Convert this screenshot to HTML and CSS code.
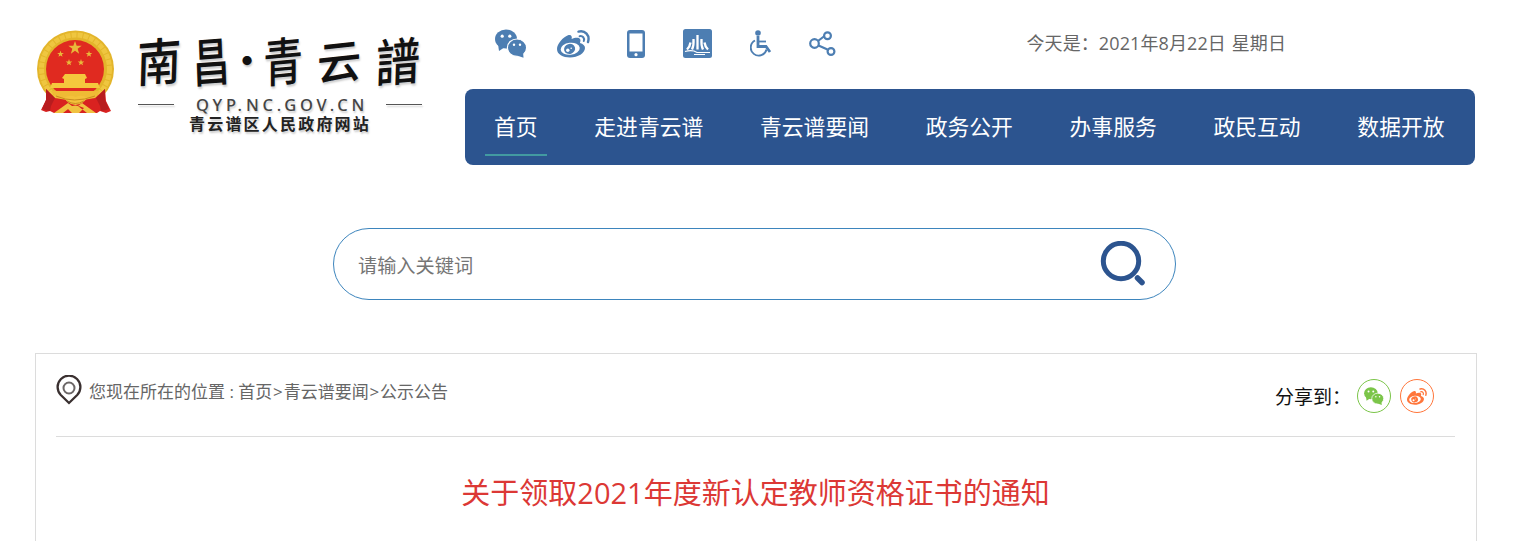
FILE: index.html
```html
<!DOCTYPE html>
<html lang="zh-CN">
<head>
    <meta charset="UTF-8">
    <title>关于领取2021年度新认定教师资格证书的通知</title>
    <link rel="stylesheet" href="styles.css">
</head>
<body>
    <!-- shared icons -->
    <svg class="symbols" width="0" height="0">
        <symbol id="icon-wechat" viewBox="0 0 32 29">
            <ellipse cx="11" cy="10" rx="11" ry="9.6" fill="currentColor"/>
            <path d="M3 15L4 22L10 18Z" fill="currentColor"/>
            <ellipse cx="22" cy="18.7" rx="9.6" ry="8.7" fill="currentColor" stroke="#fff" stroke-width="1.2"/>
            <path d="M22 26.5L28.5 28.8L28 23Z" fill="currentColor"/>
            <g fill="#fff">
                <circle cx="7.2" cy="7.2" r="1.6"/>
                <circle cx="14.8" cy="7.2" r="1.6"/>
                <circle cx="19" cy="15.8" r="1.2"/>
                <circle cx="25" cy="15.8" r="1.2"/>
            </g>
        </symbol>
        <symbol id="icon-weibo" viewBox="0 0 33 28">
            <path d="M0 19C0 14 6 7 11 5.2C14 4.2 15.5 6 14.6 9C18 7.6 23 7 23.4 10C23.6 11.4 23 12.6 23 13C26 14 28 15.6 28 18C28 23 21 27.5 13 27.5C6 27.5 0 24.5 0 19Z" fill="currentColor"/>
            <ellipse cx="13.2" cy="18.8" rx="9.6" ry="6" fill="#fff" transform="rotate(-6 13.2 18.8)"/>
            <ellipse cx="12.6" cy="18.9" rx="5.6" ry="5" fill="currentColor" transform="rotate(-18 12.6 18.9)"/>
            <circle cx="10.8" cy="20.3" r="1.7" fill="#fff"/>
            <circle cx="14.2" cy="18.2" r=".8" fill="#fff"/>
            <path d="M21.5 1.6C28 -.2 33.2 5.4 31 12" fill="none" stroke="currentColor" stroke-width="2.4" stroke-linecap="round"/>
            <path d="M22.6 6.2C25.8 5.6 27.8 8 26.8 11" fill="none" stroke="currentColor" stroke-width="2" stroke-linecap="round"/>
        </symbol>
        <symbol id="star" viewBox="-10 -10 20 20">
            <path d="M0-10L2.4-3.1L9.5-3.1L3.8 1.2L5.9 8.1L0 4L-5.9 8.1L-3.8 1.2L-9.5-3.1L-2.4-3.1Z" fill="#e9b93a"/>
        </symbol>
    </svg>

    <div class="header">
        <a class="logo" href="#">
            <svg class="emblem" width="80" height="86" viewBox="0 0 80 86">
                <circle cx="39.5" cy="40" r="38.5" fill="#e3b52b"/>
                <circle cx="39.5" cy="40" r="34" fill="none" stroke="#efc640" stroke-width="5" stroke-dasharray="5 1"/>
                <circle cx="39" cy="40" r="29" fill="#e02a20"/>
                <use href="#star" x="32" y="12" width="14" height="14"/>
                <use href="#star" x="21" y="21.500" width="7" height="7"/>
                <use href="#star" x="49.500" y="21.500" width="7" height="7"/>
                <use href="#star" x="29.500" y="30" width="7" height="7"/>
                <use href="#star" x="41.500" y="30" width="7" height="7"/>
                <path d="M29 45h20l2 4-2 1v4h13l2 5H14l2-5h12v-4l-2-1z" fill="#f5c83d"/>
                <path d="M15 62h49c-6 10-16 14-25 14S21 72 15 62z" fill="#efbb35"/>
                <path d="M10 60l9 9 12 2 8 4 8-4 12-2 10-9 1 12 5 10-5 2-6-2-3 2H18l-4-2-4 1-5-2 5-10z" fill="#d92220"/>
                <path d="M10 60l9 9-4 8-1 5-5-1-3-1 4-9zM69 60l-9 9 4 8 1 5 5-1 3-1-4-9z" fill="#b81c1e"/>
                <path d="M28 69q6-4 11.500-1 6-3 12 1l-4 4q-8 6-16 0z" fill="#f3c13b"/>
                <path d="M18 84l14-10 4 3-9 7zM60 84l-14-10-4 3 9 7zM31 79q8-5 17 0l-5 5h-7z" fill="#f0c241"/>
                <path d="M20 67q18 8 39 0M31 72q8 5 17 0" fill="none" stroke="#c98d1f"/>
            </svg>
            <div class="logo-text">
                <div class="logo-name">
                    <span class="nan">南</span>
                    <span class="chang">昌</span>
                    <span class="dot">·</span>
                    <span class="qing">青</span>
                    <span class="yun">云</span>
                    <span class="pu">譜</span>
                </div>
                <div class="logo-domain"><i></i><span>QYP.NC.GOV.CN</span><i></i></div>
                <div class="logo-sub">青云谱区人民政府网站</div>
            </div>
        </a>

        <div class="header-right">
            <div class="top">
                <div class="tools">
                    <svg width="32" height="29"><use href="#icon-wechat"/></svg>
                    <svg width="33" height="28"><use href="#icon-weibo"/></svg>
                    <svg width="18" height="28" viewBox="0 0 18 28">
                        <rect width="18" height="28" rx="3" fill="currentColor"/>
                        <rect x="2.500" y="3.500" width="13" height="18" fill="#fff"/>
                        <circle cx="9" cy="24.700" r="1.600" fill="#fff"/>
                    </svg>
                    <svg width="29" height="29" viewBox="0 0 29 29">
                        <rect width="29" height="29" rx="2.500" fill="currentColor"/>
                        <path d="M4 20.500q3-3 3.500-7M9 20.500q2-4 1.500-10.500M14.500 20.500V6M20 20.500q-2-4-1.500-10.500M25 20.500q-3-3-3.500-7" fill="none" stroke="#fff" stroke-width="2.300"/>
                        <path d="M2 22.500q5-1.500 9-.5l3 1.500h13M11 25.500h11" fill="none" stroke="#fff" stroke-width="1.200"/>
                    </svg>
                    <svg width="22" height="27" viewBox="0 0 22 27">
                        <circle cx="8" cy="3" r="2.800" fill="currentColor"/>
                        <path d="M8 6v10.500h8l4 5.500" fill="none" stroke="currentColor" stroke-width="2.800"/>
                        <path d="M8 11.500h8" stroke="currentColor" stroke-width="1.800"/>
                        <path d="M5 10.500A8 8 0 1 0 16.500 19.500" fill="none" stroke="currentColor" stroke-width="1.900"/>
                    </svg>
                    <svg width="27" height="26" viewBox="0 0 27 26">
                        <g fill="none" stroke="currentColor" stroke-width="2.200">
                            <path d="M9 10l6.500-5M9.500 14.500l9 4"/>
                            <circle cx="5.500" cy="12.500" r="4.300"/>
                            <circle cx="18.500" cy="4.700" r="3.400"/>
                            <circle cx="22" cy="20.500" r="3.400"/>
                        </g>
                    </svg>
                </div>
                <div class="date">今天是：2021年8月22日 星期日</div>
            </div>
            <div class="nav">
                <a class="active" href="#">首页</a>
                <a href="#">走进青云谱</a>
                <a href="#">青云谱要闻</a>
                <a href="#">政务公开</a>
                <a href="#">办事服务</a>
                <a href="#">政民互动</a>
                <a href="#">数据开放</a>
            </div>
        </div>
    </div>

    <div class="search">
        <input type="text" placeholder="请输入关键词">
        <svg width="46" height="46" viewBox="0 0 46 46">
            <circle cx="21" cy="20" r="17.700" fill="none" stroke="#2c548f" stroke-width="5"/>
            <path d="M37.500 37l4.500 4.500" stroke="#2c548f" stroke-width="5.500" stroke-linecap="round"/>
        </svg>
    </div>

    <div class="content">
        <div class="bar">
            <div class="crumbs">
                <svg width="26" height="30" viewBox="0 0 26 30">
                    <path d="M13 28L4.800 20A11.400 11.400 0 1 1 21.200 20Z" fill="none" stroke="#3a3030" stroke-width="2.300"/>
                    <circle cx="13" cy="13" r="5.500" fill="none" stroke="#6b6666" stroke-width="2"/>
                </svg>
                <span>您现在所在的位置 : <a href="#">首页</a><b>&gt;</b><a href="#">青云谱要闻</a><b>&gt;</b><a href="#">公示公告</a></span>
            </div>
            <div class="share">
                <span>分享到：</span>
                <a class="wechat" href="#"><svg width="20" height="18"><use href="#icon-wechat"/></svg></a>
                <a class="weibo" href="#"><svg width="20" height="17"><use href="#icon-weibo"/></svg></a>
            </div>
        </div>
        <h1>关于领取2021年度新认定教师资格证书的通知</h1>
    </div>
</body>
</html>
```

FILE: styles.css
```css
* {
    margin: 0;
    padding: 0;
    box-sizing: border-box;
}

body {
    width: 1530px;
    height: 541px;
    overflow: hidden;
    background: #fff;
    font-family: "Open Sans", "Noto Sans CJK SC", sans-serif;
    color: #666;
}

a {
    color: inherit;
    text-decoration: none;
}

svg {
    display: block;
    flex: none;
}

.symbols {
    position: absolute;
}

/* header */
.header {
    display: flex;
    height: 165px;
    margin-left: 36px;
}

.logo {
    display: flex;
    width: 429px;
    padding-top: 29px;
}

.logo-text {
    width: 284px;
    margin-left: 22px;
    color: #111;
    text-shadow: 1px 2px 2px rgba(0,0,0,0.2);
}

.logo-name {
    display: grid;
    grid-template-columns: 42px 62px 10px 62px 50px 68px;
    justify-items: center;
    height: 64px;
    line-height: 60px;
    font-family: "Noto Sans CJK SC", sans-serif;
    font-size: 44px;
    font-weight: 500;
}

.logo-name span {
    transform: scaleY(1.16) skewX(-6deg) rotate(-4deg);
}

.logo-name .chang {
    transform: scale(0.84, 1.18) rotate(-3deg);
}

.logo-name .dot {
    width: 44px;
    text-align: center;
    transform: scale(0.9);
}

.logo-name .qing {
    transform: scale(0.9, 1.18) skewX(-4deg) rotate(-4deg);
}

.logo-name .yun {
    transform: scaleY(1.05) skewX(-6deg) rotate(-6deg);
}

.logo-domain {
    display: flex;
    align-items: center;
    justify-content: space-between;
    height: 22px;
    font-family: "Noto Sans", sans-serif;
    font-size: 16.5px;
    font-weight: 500;
    color: #444;
}

.logo-domain span {
    margin-right: -4px;
    letter-spacing: 3.8px;
}

.logo-domain i {
    width: 36px;
    height: 1px;
    background: #555;
    box-shadow: 1px 2px 2px rgba(0,0,0,0.2);
}

.logo-sub {
    height: 20px;
    line-height: 18px;
    font-size: 16px;
    font-weight: 700;
    letter-spacing: 2.2px;
    text-align: center;
    color: #222;
}

.header-right {
    width: 1010px;
}

.top {
    display: flex;
    justify-content: space-between;
    height: 89px;
    padding: 29px 189px 0 30px;
}

.tools {
    display: flex;
    color: #4d7eb2;
}

.tools svg:nth-child(2) {
    margin: 1px 0 0 30px;
}

.tools svg:nth-child(3) {
    margin: 1px 0 0 37px;
}

.tools svg:nth-child(4) {
    margin-left: 38px;
}

.tools svg:nth-child(5) {
    margin: 1px 0 0 38px;
}

.tools svg:nth-child(6) {
    margin: 2px 0 0 37px;
}

.date {
    height: 30px;
    line-height: 28px;
    font-size: 18px;
    word-spacing: 1px;
    letter-spacing: 0.1px;
    white-space: nowrap;
}

.nav {
    display: flex;
    gap: 38.7px;
    height: 76px;
    padding: 9px 20px;
    border-radius: 8px;
    background: #2c548f;
}

.nav a {
    height: 58px;
    padding: 0 9px;
    line-height: 58px;
    font-size: 21.8px;
    color: #fff;
    white-space: nowrap;
}

.nav .active {
    border-bottom: 2px solid #429aa1;
}

/* search */
.search {
    display: flex;
    align-items: center;
    width: 843px;
    height: 72px;
    margin: 63px 0 0 333px;
    padding: 0 29px 0 24px;
    border: 1px solid #3d85bd;
    border-radius: 36px;
}

.search input {
    flex: 1;
    height: 60px;
    padding-top: 2px;
    border: none;
    outline: none;
    font-family: inherit;
    font-size: 19.2px;
}

.search input::placeholder {
    color: #757575;
}

/* article */
.content {
    width: 1442px;
    height: 188px;
    margin: 53px 0 0 35px;
    padding: 0 21px 0 20px;
    border: 1px solid #dcdcdc;
    border-bottom: none;
}

.bar {
    display: flex;
    justify-content: space-between;
    height: 83px;
    border-bottom: 1px solid #dcdcdc;
}

.crumbs {
    display: flex;
    height: 30px;
    margin-top: 21px;
    line-height: 34px;
    font-size: 17px;
}

.crumbs span {
    margin-left: 7px;
}

.crumbs b {
    padding: 0 0.8px;
    font-weight: 400;
}

.share {
    display: flex;
    align-items: center;
    height: 34px;
    margin: 25px 21px 0 0;
    font-size: 19px;
    color: #111;
}

.share span {
    margin-right: 6px;
}

.share a {
    display: flex;
    align-items: center;
    justify-content: center;
    width: 34px;
    height: 34px;
    border: 1px solid;
    border-radius: 50%;
}

.share .wechat {
    color: #7bc549;
}

.share .weibo {
    margin-left: 9px;
    color: #ff763b;
}

h1 {
    margin-top: 34px;
    line-height: 44px;
    font-size: 29px;
    font-weight: 400;
    text-align: center;
    color: #dc3835;
}
```
